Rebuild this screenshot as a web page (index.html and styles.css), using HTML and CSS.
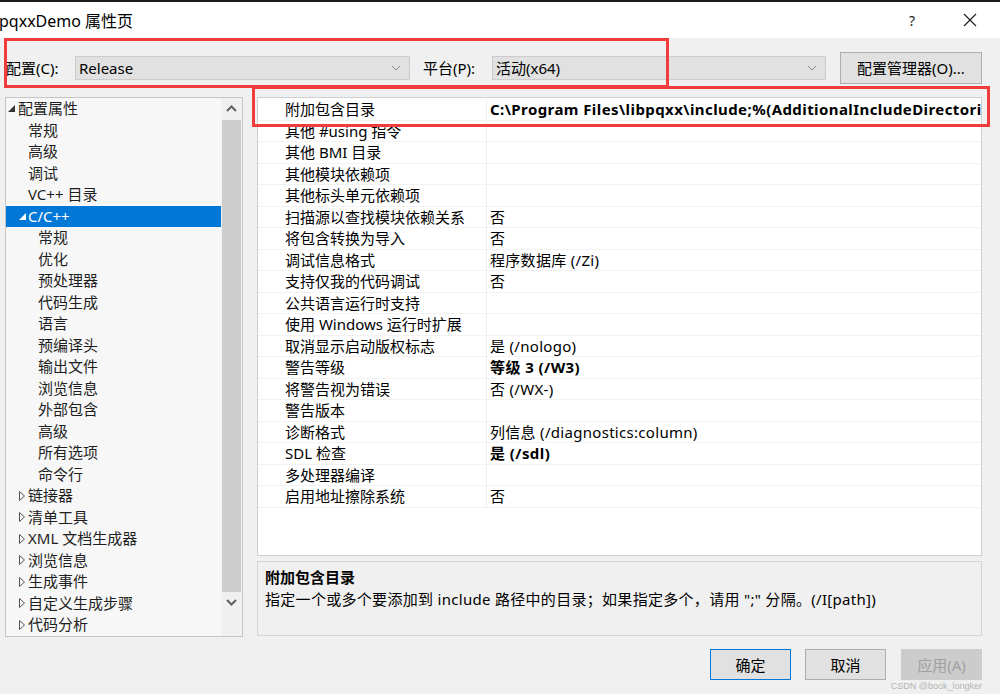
FILE: index.html
```html
<!DOCTYPE html>
<html lang="zh-CN">
<head>
    <meta charset="UTF-8">
    <title>pqxxDemo 属性页</title>
    <link rel="stylesheet" href="styles.css">
</head>
<body>
    <div class="titlebar">
        <span class="title">pqxxDemo 属性页</span>
        <span class="help">?</span>
        <svg class="close" width="14" height="14" viewBox="0 0 14 14"><path d="M1 1 L13 13 M13 1 L1 13" stroke="#222" stroke-width="1.2" fill="none"/></svg>
    </div>

    <div class="config-row">
        <label class="cfg-label">配置(C):</label>
        <div class="combo combo-config">
            <span>Release</span>
            <svg class="chev" width="10" height="6" viewBox="0 0 10 6"><path d="M1 1 L5 5 L9 1" stroke="#8a8a8a" stroke-width="1" fill="none"/></svg>
        </div>
        <label class="cfg-label cfg-platform">平台(P):</label>
        <div class="combo combo-platform">
            <span>活动(x64)</span>
            <svg class="chev" width="10" height="6" viewBox="0 0 10 6"><path d="M1 1 L5 5 L9 1" stroke="#8a8a8a" stroke-width="1" fill="none"/></svg>
        </div>
        <button class="btn btn-manager">配置管理器(O)...</button>
    </div>

    <div class="main">
        <div class="tree">
            <div class="tree-list">
                <div class="node l1"><span class="tri"><svg width="7" height="7" viewBox="0 0 7 7"><path d="M7 0 L7 7 L0 7 Z" fill="#333"/></svg></span>配置属性</div>
                <div class="node l2">常规</div>
                <div class="node l2">高级</div>
                <div class="node l2">调试</div>
                <div class="node l2">VC++ 目录</div>
                <div class="node l2t selected"><span class="tri"><svg width="7" height="7" viewBox="0 0 7 7"><path d="M7 0 L7 7 L0 7 Z" fill="#fff"/></svg></span>C/C++</div>
                <div class="node l3">常规</div>
                <div class="node l3">优化</div>
                <div class="node l3">预处理器</div>
                <div class="node l3">代码生成</div>
                <div class="node l3">语言</div>
                <div class="node l3">预编译头</div>
                <div class="node l3">输出文件</div>
                <div class="node l3">浏览信息</div>
                <div class="node l3">外部包含</div>
                <div class="node l3">高级</div>
                <div class="node l3">所有选项</div>
                <div class="node l3">命令行</div>
                <div class="node l2t"><span class="tri"><svg width="6" height="10" viewBox="0 0 6 10"><path d="M0.5 0.5 L5.5 5 L0.5 9.5 Z" fill="none" stroke="#555" stroke-width="1"/></svg></span>链接器</div>
                <div class="node l2t"><span class="tri"><svg width="6" height="10" viewBox="0 0 6 10"><path d="M0.5 0.5 L5.5 5 L0.5 9.5 Z" fill="none" stroke="#555" stroke-width="1"/></svg></span>清单工具</div>
                <div class="node l2t"><span class="tri"><svg width="6" height="10" viewBox="0 0 6 10"><path d="M0.5 0.5 L5.5 5 L0.5 9.5 Z" fill="none" stroke="#555" stroke-width="1"/></svg></span>XML 文档生成器</div>
                <div class="node l2t"><span class="tri"><svg width="6" height="10" viewBox="0 0 6 10"><path d="M0.5 0.5 L5.5 5 L0.5 9.5 Z" fill="none" stroke="#555" stroke-width="1"/></svg></span>浏览信息</div>
                <div class="node l2t"><span class="tri"><svg width="6" height="10" viewBox="0 0 6 10"><path d="M0.5 0.5 L5.5 5 L0.5 9.5 Z" fill="none" stroke="#555" stroke-width="1"/></svg></span>生成事件</div>
                <div class="node l2t"><span class="tri"><svg width="6" height="10" viewBox="0 0 6 10"><path d="M0.5 0.5 L5.5 5 L0.5 9.5 Z" fill="none" stroke="#555" stroke-width="1"/></svg></span>自定义生成步骤</div>
                <div class="node l2t"><span class="tri"><svg width="6" height="10" viewBox="0 0 6 10"><path d="M0.5 0.5 L5.5 5 L0.5 9.5 Z" fill="none" stroke="#555" stroke-width="1"/></svg></span>代码分析</div>
            </div>
            <div class="scrollbar">
                <svg class="arrow" width="11" height="7" viewBox="0 0 11 7"><path d="M1 6 L5.5 1.5 L10 6" stroke="#606060" stroke-width="2" fill="none"/></svg>
                <div class="thumb"></div>
                <svg class="arrow" width="11" height="7" viewBox="0 0 11 7"><path d="M1 1 L5.5 5.5 L10 1" stroke="#606060" stroke-width="2" fill="none"/></svg>
            </div>
        </div>

        <div class="right">
            <div class="grid">
                <div class="row"><div class="name">附加包含目录</div><div class="value bold">C:\Program Files\libpqxx\include;%(AdditionalIncludeDirectories)</div></div>
                <div class="row"><div class="name">其他 #using 指令</div><div class="value"></div></div>
                <div class="row"><div class="name">其他 BMI 目录</div><div class="value"></div></div>
                <div class="row"><div class="name">其他模块依赖项</div><div class="value"></div></div>
                <div class="row"><div class="name">其他标头单元依赖项</div><div class="value"></div></div>
                <div class="row"><div class="name">扫描源以查找模块依赖关系</div><div class="value">否</div></div>
                <div class="row"><div class="name">将包含转换为导入</div><div class="value">否</div></div>
                <div class="row"><div class="name">调试信息格式</div><div class="value">程序数据库 (/Zi)</div></div>
                <div class="row"><div class="name">支持仅我的代码调试</div><div class="value">否</div></div>
                <div class="row"><div class="name">公共语言运行时支持</div><div class="value"></div></div>
                <div class="row"><div class="name">使用 Windows 运行时扩展</div><div class="value"></div></div>
                <div class="row"><div class="name">取消显示启动版权标志</div><div class="value">是 (/nologo)</div></div>
                <div class="row"><div class="name">警告等级</div><div class="value bold">等级 3 (/W3)</div></div>
                <div class="row"><div class="name">将警告视为错误</div><div class="value">否 (/WX-)</div></div>
                <div class="row"><div class="name">警告版本</div><div class="value"></div></div>
                <div class="row"><div class="name">诊断格式</div><div class="value">列信息 (/diagnostics:column)</div></div>
                <div class="row"><div class="name">SDL 检查</div><div class="value bold">是 (/sdl)</div></div>
                <div class="row"><div class="name">多处理器编译</div><div class="value"></div></div>
                <div class="row"><div class="name">启用地址擦除系统</div><div class="value">否</div></div>
            </div>
            <div class="desc">
                <div class="desc-title">附加包含目录</div>
                <div class="desc-text">指定一个或多个要添加到 include 路径中的目录；如果指定多个，请用 ";" 分隔。(/I[path])</div>
            </div>
        </div>
    </div>

    <div class="footer">
        <button class="btn btn-ok">确定</button>
        <button class="btn">取消</button>
        <button class="btn btn-disabled">应用(A)</button>
    </div>
    <div class="watermark">CSDN @book_longker</div>

    <div class="mark mark-config"></div>
    <div class="mark mark-row"></div>
</body>
</html>
```

FILE: styles.css
```css
body {
    margin: 0;
    width: 1000px;
    height: 694px;
    overflow: hidden;
    position: relative;
    background: #f0f0f0;
    font-family: 'Noto Sans', 'Noto Sans CJK SC', sans-serif;
    font-size: 15px;
    color: #000;
}
.titlebar {
    height: 36px;
    border-top: 2px solid #1c1c1c;
    background: #fff;
    display: flex;
    align-items: center;
}
.titlebar .title {
    font-size: 16px;
    margin-left: -1px;
    flex: 1;
}
.titlebar .help {
    font-size: 14px;
    width: 20px;
    margin-right: 34px;
    color: #222;
}
.titlebar .close {
    margin-right: 23px;
}
.config-row {
    height: 59px;
    display: flex;
    align-items: center;
    padding-left: 6px;
}
.cfg-label {
    width: 69px;
    line-height: 20px;
}
.cfg-platform {
    margin-left: 13px;
}
.combo {
    height: 24px;
    box-sizing: border-box;
    border: 1px solid #cccccc;
    background: #e1e1e1;
    display: flex;
    align-items: center;
    justify-content: space-between;
    padding: 0 8px 0 3px;
    line-height: 20px;
}
.combo-config {
    width: 335px;
}
.combo-platform {
    width: 334px;
}
.btn {
    font-family: inherit;
    font-size: 15px;
    background: #e1e1e1;
    border: 1px solid #adadad;
    color: #000;
    padding: 0;
    box-sizing: border-box;
}
.btn-manager {
    margin-left: 14px;
    width: 142px;
    height: 32px;
}
.main {
    display: flex;
    padding-left: 5px;
    height: 540px;
}
.tree {
    width: 238px;
    box-sizing: border-box;
    border: 1px solid #c6c6c6;
    background: #f7f7f7;
    display: flex;
}
.tree-list {
    flex: 1;
    color: #1e1e1e;
}
.node {
    height: 21.5px;
    line-height: 21.5px;
    display: flex;
    align-items: center;
    white-space: nowrap;
}
.node .tri {
    width: 10px;
    display: flex;
    align-items: center;
}
.l1 {
    padding-left: 2px;
}
.l2 {
    padding-left: 22px;
}
.l2t {
    padding-left: 12px;
}
.l2t .tri {
    padding-left: 1px;
    width: 9px;
}
.l3 {
    padding-left: 32px;
}
.selected {
    background: #0078d7;
    color: #fff;
}
.scrollbar {
    width: 21px;
    background: #f0f0f0;
    display: flex;
    flex-direction: column;
    align-items: center;
}
.scrollbar .arrow {
    margin: 7px 0;
}
.thumb {
    width: 19px;
    height: 472px;
    background: #cdcdcd;
    margin-top: 1px;
}
.right {
    margin-left: 14px;
    width: 725px;
    display: flex;
    flex-direction: column;
}
.grid {
    height: 459px;
    box-sizing: border-box;
    border: 1px solid #cfcfcf;
    background: #fff;
    padding-top: 1px;
    overflow: hidden;
}
.row {
    display: flex;
    height: 21.5px;
    line-height: 21px;
    box-sizing: border-box;
    border-bottom: 1px solid #f2f2f2;
}
.row .name {
    width: 229px;
    padding-left: 27px;
    box-sizing: border-box;
    border-right: 1px solid #f0f0f0;
    white-space: nowrap;
}
.row .value {
    flex: 1;
    padding-left: 3px;
    white-space: nowrap;
    overflow: hidden;
    letter-spacing: 0.3px;
}
.row .bold {
    font-weight: bold;
    letter-spacing: 0.42px;
}
.desc {
    margin-top: 5px;
    height: 75px;
    box-sizing: border-box;
    border: 1px solid #d4d4d4;
    background: #f0f0f0;
    padding: 5px 0 0 7px;
    line-height: 21.5px;
}
.desc-title {
    font-weight: bold;
}
.desc-text {
    letter-spacing: 0.3px;
}
.footer {
    display: flex;
    justify-content: flex-end;
    padding: 12px 18px 0 0;
    gap: 14px;
}
.footer .btn {
    width: 81px;
    height: 31px;
}
.btn-ok {
    border-color: #0078d7;
}
.footer .btn-disabled {
    background: #cccccc;
    border-color: #cccccc;
    color: #a0a0a0;
    margin-left: 1px;
}
.watermark {
    position: absolute;
    right: 18px;
    bottom: 3px;
    font-size: 9px;
    color: #b4b4b4;
    font-family: 'Liberation Sans', sans-serif;
}
.mark {
    position: absolute;
    border: 3px solid #f03c3c;
    box-sizing: border-box;
}
.mark-config {
    left: 4px;
    top: 38px;
    width: 665px;
    height: 50px;
}
.mark-row {
    left: 252px;
    top: 86px;
    width: 738px;
    height: 41px;
}
```
